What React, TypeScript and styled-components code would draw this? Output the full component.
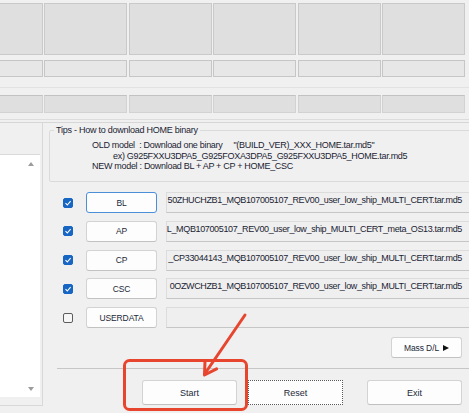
import React from "react";
import styled, { createGlobalStyle } from "styled-components";

const uiFont = `"Liberation Sans", Arial, sans-serif`;

const GlobalStyle = createGlobalStyle`
	html, body {
		margin: 0;
		padding: 0;
		background: #f0f0f0;
	}
`;

type Slot = {
	label: string;
	checked: boolean;
	file: string;
	focused?: boolean;
};

const slots: Slot[] = [
	{
		label: "BL",
		checked: true,
		focused: true,
		file: "50ZHUCHZB1_MQB107005107_REV00_user_low_ship_MULTI_CERT.tar.md5",
	},
	{
		label: "AP",
		checked: true,
		file: "L_MQB107005107_REV00_user_low_ship_MULTI_CERT_meta_OS13.tar.md5",
	},
	{
		label: "CP",
		checked: true,
		file: "_CP33044143_MQB107005107_REV00_user_low_ship_MULTI_CERT.tar.md5",
	},
	{
		label: "CSC",
		checked: true,
		file: "0OZWCHZB1_MQB107005107_REV00_user_low_ship_MULTI_CERT.tar.md5",
	},
	{ label: "USERDATA", checked: false, file: "" },
];

const ports = [0, 1, 2, 3, 4, 5];

export default function App() {
	return (
		<Window>
			<GlobalStyle />
			<PortArea>
				<PortRow>
					{ports.map((p) => (
						<PortCell key={p} />
					))}
				</PortRow>
				<PortRow>
					{ports.map((p) => (
						<IdCell key={p} />
					))}
				</PortRow>
				<Rule $gap={10} $color="#e2e2e2" />
				<PortRow>
					{ports.map((p) => (
						<StatusCell key={p} />
					))}
				</PortRow>
				<Rule $gap={6} $color="#dcdcdc" />
				<Rule $gap={2} $color="#d6d6d6" />
			</PortArea>

			<Lower>
				<LogPanel>
					<LogBox>
						<ScrollArrow $down={false} />
						<ScrollArrow $down />
					</LogBox>
				</LogPanel>

				<Options>
					<Tips>
						<TipsTitle>Tips - How to download HOME binary</TipsTitle>
						<TipLine>{`OLD model  : Download one binary     "(BUILD_VER)_XXX_HOME.tar.md5"`}</TipLine>
						<TipLine $indent={21}>
							ex) G925FXXU3DPA5_G925FOXA3DPA5_G925FXXU3DPA5_HOME.tar.md5
						</TipLine>
						<TipLine>NEW model : Download BL + AP + CP + HOME_CSC</TipLine>
					</Tips>

					<Slots>
						{slots.map((slot) => (
							<SlotRow key={slot.label}>
								<Check $checked={slot.checked}>
									{slot.checked && (
										<svg width="8" height="8" viewBox="0 0 8 8">
											<polyline
												points="1.5,4.2 3.3,6 6.6,2.2"
												fill="none"
												stroke="#fff"
												strokeWidth="1.1"
											/>
										</svg>
									)}
								</Check>
								<SlotButton $focused={slot.focused}>{slot.label}</SlotButton>
								<FileField>
									<span>{slot.file}</span>
								</FileField>
							</SlotRow>
						))}
					</Slots>

					<MassRow>
						<SlotButton>
							Mass D/L <Play />
						</SlotButton>
					</MassRow>

					<Separator />

					<Actions>
						<ActionButton $mr={11}>Start</ActionButton>
						<ActionButton $dotted $mr={24}>
							Reset
						</ActionButton>
						<ActionButton>Exit</ActionButton>
					</Actions>
				</Options>
			</Lower>

			<Marks width="469" height="413" viewBox="0 0 469 413">
				<rect
					x="124.5"
					y="360.5"
					width="122"
					height="49"
					rx="5"
					fill="none"
					stroke="#e8452e"
					strokeWidth="3"
				/>
				<line
					x1="245"
					y1="315"
					x2="205"
					y2="373.5"
					stroke="#e8452e"
					strokeWidth="3"
					strokeLinecap="round"
				/>
				<polyline
					points="216.6,368.9 204.5,375 205,361"
					fill="none"
					stroke="#e8452e"
					strokeWidth="3"
					strokeLinecap="round"
					strokeLinejoin="round"
				/>
			</Marks>
		</Window>
	);
}

const Window = styled.div`
	position: relative;
	width: 469px;
	height: 413px;
	overflow: hidden;
	background: #f0f0f0;
	font-family: ${uiFont};
	color: #1b2433;
`;

const PortArea = styled.div`
	display: flex;
	flex-direction: column;
	padding-top: 3px;
`;

const PortRow = styled.div`
	display: flex;
	gap: 1.5px;
	margin-left: -40.5px;
	& + & {
		margin-top: 5px;
	}
`;

const PortCell = styled.div`
	box-sizing: border-box;
	flex: 0 0 83px;
	height: 52px;
	background: #dfdfdf;
	border: 1px solid #c9c9c9;
`;

const IdCell = styled.div`
	box-sizing: border-box;
	flex: 0 0 83px;
	height: 17px;
	background: #e7e7e7;
	border: 1px solid #c6c6c6;
`;

const StatusCell = styled.div`
	box-sizing: border-box;
	flex: 0 0 83px;
	height: 18px;
	margin-top: 7px;
	background: #dfdfdf;
	border: 1px solid #d2d2d2;
	border-top-color: #c2c2c2;
`;

const Rule = styled.div<{ $gap: number; $color: string }>`
	height: 1px;
	margin-top: ${(p) => p.$gap}px;
	background: ${(p) => p.$color};
`;

const Lower = styled.div`
	display: flex;
	height: 290px;
`;

const LogPanel = styled.div`
	box-sizing: border-box;
	flex: 0 0 43px;
	height: 283px;
	padding-top: 31px;
	border-right: 1px solid #d8d8d8;
	border-bottom: 1px solid #d8d8d8;
`;

const LogBox = styled.div`
	box-sizing: border-box;
	width: 40px;
	height: 243px;
	background: #fff;
	border-top: 1px solid #dadada;
	display: flex;
	flex-direction: column;
	justify-content: space-between;
	align-items: flex-end;
	padding: 7px 6px 6px 0;
`;

const ScrollArrow = styled.div<{ $down: boolean }>`
	width: 0;
	height: 0;
	border-left: 3.5px solid transparent;
	border-right: 3.5px solid transparent;
	${(p) =>
		p.$down
			? "border-top: 4px solid #9c9c9c;"
			: "border-bottom: 4px solid #9c9c9c;"}
`;

const Options = styled.div`
	flex: 1;
	min-width: 0;
	display: flex;
	flex-direction: column;
	padding-left: 6px;
`;

const Tips = styled.fieldset`
	box-sizing: border-box;
	height: 58px;
	margin: 1px -40px 0 0;
	padding: 4px 0 0 0;
	border: 1px solid #dadada;
	border-radius: 2px;
	min-width: 0;
`;

const TipsTitle = styled.legend`
	margin-left: 4px;
	padding: 0 2px;
	font-size: 9px;
	letter-spacing: -0.25px;
	line-height: 12px;
	color: #1b2433;
`;

const TipLine = styled.div<{ $indent?: number }>`
	padding-left: ${(p) => 42 + (p.$indent ?? 0)}px;
	font-size: 9px;
	letter-spacing: -0.3px;
	line-height: 10.5px;
	white-space: pre;
	color: #1b2433;
`;

const Slots = styled.div`
	display: flex;
	flex-direction: column;
	gap: 7.75px;
	margin-top: 10px;
	padding-left: 14px;
`;

const SlotRow = styled.div`
	display: flex;
	align-items: center;
	height: 21px;
`;

const Check = styled.div<{ $checked: boolean }>`
	box-sizing: border-box;
	flex: 0 0 10px;
	height: 10px;
	margin-right: 13px;
	border-radius: 2px;
	display: flex;
	align-items: center;
	justify-content: center;
	background: ${(p) => (p.$checked ? "#1766c3" : "#f6f6f6")};
	border: 1px solid ${(p) => (p.$checked ? "#1766c3" : "#5c5c5c")};
`;

const SlotButton = styled.div<{ $focused?: boolean }>`
	box-sizing: border-box;
	flex: 0 0 71px;
	width: 71px;
	height: 21px;
	display: flex;
	align-items: center;
	justify-content: center;
	gap: 4px;
	background: #fdfdfd;
	border: 1px solid ${(p) => (p.$focused ? "#4a8fd8" : "#d3d3d3")};
	border-bottom-color: ${(p) => (p.$focused ? "#4a8fd8" : "#c2c2c2")};
	border-radius: 3px;
	font-size: 8.5px;
	letter-spacing: -0.1px;
	color: #1b2838;
`;

const FileField = styled.div`
	box-sizing: border-box;
	flex: 1;
	min-width: 0;
	height: 21px;
	margin: 0 -10px 0 9px;
	padding: 2px 16px 0 0;
	display: flex;
	justify-content: flex-end;
	align-items: flex-start;
	overflow: hidden;
	background: #efefef;
	border: 1px solid #dcdcdc;
	border-bottom-color: #c6c6c6;
	font-size: 9px;
	letter-spacing: -0.36px;
	line-height: 11px;
	white-space: nowrap;
	color: #1b2433;
	span {
		flex: none;
	}
`;

const Play = styled.span`
	width: 0;
	height: 0;
	border-top: 3.5px solid transparent;
	border-bottom: 3.5px solid transparent;
	border-left: 6px solid #111;
`;

const MassRow = styled.div`
	display: flex;
	justify-content: flex-end;
	margin-top: 9px;
	padding-right: 7px;
`;

const Separator = styled.div`
	height: 1px;
	margin: 10px 0 0 8px;
	background: #c6c6c6;
`;

const Actions = styled.div`
	display: flex;
	justify-content: flex-end;
	margin-top: 11px;
	padding-right: 7px;
`;

const ActionButton = styled.div<{ $dotted?: boolean; $mr?: number }>`
	box-sizing: border-box;
	width: 95px;
	height: 25px;
	margin-right: ${(p) => p.$mr ?? 0}px;
	display: flex;
	align-items: center;
	justify-content: center;
	background: #fdfdfd;
	border: 1px ${(p) => (p.$dotted ? "dotted #5a5a5a" : "solid #d3d3d3")};
	border-bottom-color: ${(p) => (p.$dotted ? "#5a5a5a" : "#c0c0c0")};
	border-radius: ${(p) => (p.$dotted ? 0 : 3)}px;
	font-size: 9px;
	color: #1b2838;
`;

const Marks = styled.svg`
	position: absolute;
	left: 0;
	top: 0;
	pointer-events: none;
`;
